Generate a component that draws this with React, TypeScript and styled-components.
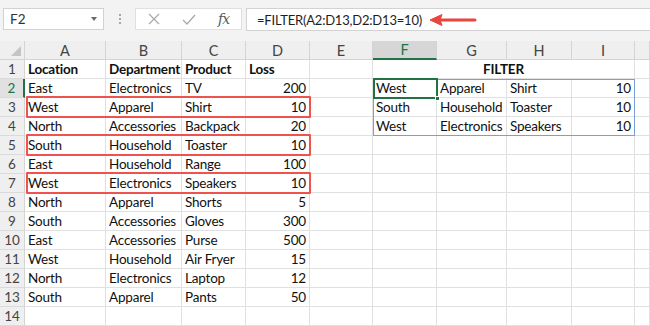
import React from 'react';
import styled, { createGlobalStyle } from 'styled-components';

const GlobalStyle = createGlobalStyle`
  html, body { margin: 0; padding: 0; background: #ffffff; overflow: hidden; }
  body { font-family: Lato, "Noto Sans", sans-serif; }
  * { box-sizing: border-box; }
`;

const Window = styled.div`
  width: 650px;
  height: 326px;
  overflow: hidden;
  display: flex;
  flex-direction: column;
  background: #ffffff;
`;

const FormulaBar = styled.div`
  flex: none;
  height: 41px;
  background: #f3f3f3;
  display: flex;
  align-items: flex-start;
  padding: 8px 0 0 3px;
`;

const NameBox = styled.div`
  width: 101px;
  height: 22px;
  background: #ffffff;
  border: 1px solid #d2d2d2;
  display: flex;
  align-items: center;
  justify-content: space-between;
  padding: 0 6px 0 6px;
  font-size: 13.5px;
  color: #333333;
`;

const Caret = styled.span`
  width: 0;
  height: 0;
  border-left: 3.5px solid transparent;
  border-right: 3.5px solid transparent;
  border-top: 4px solid #6a6a6a;
`;

const Grip = styled.div`
  width: 31px;
  height: 22px;
  display: flex;
  flex-direction: column;
  align-items: center;
  justify-content: center;
  gap: 2px;
`;

const GripDot = styled.span`
  width: 2px;
  height: 2px;
  background: #a8a8a8;
`;

const FxGroup = styled.div`
  width: 107px;
  height: 22px;
  background: #ffffff;
  border: 1px solid #e0e0e0;
  display: grid;
  grid-template-columns: repeat(3, 1fr);
  align-items: center;
  justify-items: center;
`;

const FxLabel = styled.span`
  font-family: "DejaVu Serif", "Liberation Serif", serif;
  font-style: italic;
  font-size: 14px;
  color: #5a5a5a;
  letter-spacing: -1px;
`;

const FormulaInput = styled.div`
  flex: 1;
  margin-left: 4px;
  height: 23px;
  background: #ffffff;
  border: 1px solid #d2d2d2;
  border-right: none;
  display: flex;
  align-items: center;
  padding-left: 10px;
  gap: 7px;
  font-size: 13px;
  letter-spacing: -0.2px;
  color: #1e1e1e;
`;

const Sheet = styled.div`
  flex: 1;
  display: grid;
  grid-template-columns: 25px 81px 76px 64px 64px 63px 64px 70px 65px 63px 1fr;
  grid-auto-rows: 19px;
  background: #ffffff;
`;

const Corner = styled.div`
  grid-column: 1;
  grid-row: 1;
  background: #efefef;
  border-right: 1px solid #d4d4d4;
  border-bottom: 1px solid #d4d4d4;
  position: relative;
  &::after {
    content: '';
    position: absolute;
    right: 3px;
    bottom: 3px;
    width: 0;
    height: 0;
    border-left: 10px solid transparent;
    border-bottom: 10px solid #c4c4c4;
  }
`;

const ColHead = styled.div<{ $col: number; $active?: boolean }>`
  grid-column: ${(p) => p.$col};
  grid-row: 1;
  background: ${(p) => (p.$active ? '#d6d6d6' : '#efefef')};
  color: ${(p) => (p.$active ? '#217346' : '#444444')};
  border-right: 1px solid #d4d4d4;
  border-bottom: ${(p) => (p.$active ? '2px solid #217346' : '1px solid #d4d4d4')};
  display: flex;
  align-items: center;
  justify-content: center;
  font-size: 14.5px;
`;

const RowHead = styled.div<{ $row: number; $active?: boolean }>`
  grid-column: 1;
  grid-row: ${(p) => p.$row};
  background: ${(p) => (p.$active ? '#e1e1e1' : '#efefef')};
  color: ${(p) => (p.$active ? '#217346' : '#444444')};
  border-right: ${(p) => (p.$active ? '2px solid #217346' : '1px solid #d4d4d4')};
  border-bottom: 1px solid #dadada;
  display: flex;
  align-items: center;
  justify-content: center;
  font-size: 13.5px;
`;

const Cell = styled.div<{
  $row: number;
  $col: number;
  $span?: number;
  $align?: 'left' | 'right' | 'center';
  $bold?: boolean;
}>`
  grid-row: ${(p) => p.$row};
  grid-column: ${(p) => `${p.$col} / span ${p.$span ?? 1}`};
  border-right: 1px solid #e0e0e0;
  border-bottom: 1px solid #e0e0e0;
  display: flex;
  align-items: center;
  justify-content: ${(p) =>
    p.$align === 'right' ? 'flex-end' : p.$align === 'center' ? 'center' : 'flex-start'};
  padding: 0 3px 0 3px;
  font-size: 13.5px;
  letter-spacing: -0.2px;
  font-weight: ${(p) => (p.$bold ? 700 : 400)};
  color: #111111;
  white-space: nowrap;
  overflow: hidden;
`;

const RedBox = styled.div<{ $row: number }>`
  grid-row: ${(p) => p.$row};
  grid-column: 2 / 6;
  margin: -2px -1px -1px 1px;
  border: 2px solid #ef5350;
  border-radius: 1px;
  z-index: 3;
  pointer-events: none;
`;

const RangeBox = styled.div`
  grid-row: 3 / 6;
  grid-column: 7 / 11;
  border: 1px solid #7a9fd8;
  z-index: 2;
  pointer-events: none;
`;

const SelectBox = styled.div`
  grid-row: 3;
  grid-column: 7;
  margin: -1px -1px -1px 0;
  border: 2px solid #217346;
  z-index: 4;
  position: relative;
  pointer-events: none;
`;

const FillHandle = styled.span`
  position: absolute;
  right: -4px;
  bottom: -4px;
  width: 5px;
  height: 5px;
  background: #217346;
  border: 1px solid #ffffff;
`;

const COLS = ['A', 'B', 'C', 'D', 'E', 'F', 'G', 'H', 'I', ''];

type Row = [string, string, string, number];

const DATA: Row[] = [
  ['East', 'Electronics', 'TV', 200],
  ['West', 'Apparel', 'Shirt', 10],
  ['North', 'Accessories', 'Backpack', 20],
  ['South', 'Household', 'Toaster', 10],
  ['East', 'Household', 'Range', 100],
  ['West', 'Electronics', 'Speakers', 10],
  ['North', 'Apparel', 'Shorts', 5],
  ['South', 'Accessories', 'Gloves', 300],
  ['East', 'Accessories', 'Purse', 500],
  ['West', 'Household', 'Air Fryer', 15],
  ['North', 'Electronics', 'Laptop', 12],
  ['South', 'Apparel', 'Pants', 50],
];

const RESULT: Row[] = [
  ['West', 'Apparel', 'Shirt', 10],
  ['South', 'Household', 'Toaster', 10],
  ['West', 'Electronics', 'Speakers', 10],
];

const HEADERS = ['Location', 'Department', 'Product', 'Loss'];

function CancelIcon() {
  return (
    <svg width="12" height="12" viewBox="0 0 12 12">
      <path d="M1 1 L11 11 M11 1 L1 11" stroke="#a9a9a9" strokeWidth="1.2" fill="none" />
    </svg>
  );
}

function EnterIcon() {
  return (
    <svg width="14" height="11" viewBox="0 0 14 11">
      <path d="M1 6 L5 10 L13 1" stroke="#a9a9a9" strokeWidth="1.3" fill="none" />
    </svg>
  );
}

function Arrow() {
  return (
    <svg width="50" height="14" viewBox="0 0 50 14">
      <path d="M10 7 L46 7" stroke="#e8453c" strokeWidth="3" strokeLinecap="round" />
      <path d="M1 7 L13 1.5 L11 7 L13 12.5 Z" fill="#e8453c" stroke="#e8453c" strokeWidth="1" strokeLinejoin="round" />
    </svg>
  );
}

export default function App() {
  const cells: React.ReactNode[] = [];
  for (let r = 1; r <= 14; r++) {
    const gr = r + 1;
    for (let c = 0; c < 10; c++) {
      const gc = c + 2;
      if (r === 1 && c >= 5 && c <= 8) {
        if (c === 5) {
          cells.push(
            <Cell key={`${r}-${c}`} $row={gr} $col={gc} $span={4} $align="center" $bold>
              FILTER
            </Cell>
          );
        }
        continue;
      }
      let value: React.ReactNode = null;
      let align: 'left' | 'right' = 'left';
      let bold = false;
      if (r === 1 && c < 4) {
        value = HEADERS[c];
        bold = true;
      } else if (r >= 2 && r <= 13 && c < 4) {
        value = DATA[r - 2][c];
        if (c === 3) align = 'right';
      } else if (r >= 2 && r <= 4 && c >= 5 && c <= 8) {
        value = RESULT[r - 2][c - 5];
        if (c === 8) align = 'right';
      }
      cells.push(
        <Cell key={`${r}-${c}`} $row={gr} $col={gc} $align={align} $bold={bold}>
          {value}
        </Cell>
      );
    }
  }

  return (
    <Window>
      <GlobalStyle />
      <FormulaBar>
        <NameBox>
          <span>F2</span>
          <Caret />
        </NameBox>
        <Grip>
          <GripDot />
          <GripDot />
          <GripDot />
        </Grip>
        <FxGroup>
          <CancelIcon />
          <EnterIcon />
          <FxLabel>fx</FxLabel>
        </FxGroup>
        <FormulaInput>
          <span>=FILTER(A2:D13,D2:D13=10)</span>
          <Arrow />
        </FormulaInput>
      </FormulaBar>
      <Sheet>
        <Corner />
        {COLS.map((l, i) => (
          <ColHead key={i} $col={i + 2} $active={l === 'F'}>
            {l}
          </ColHead>
        ))}
        {Array.from({ length: 14 }, (_, i) => (
          <RowHead key={i} $row={i + 2} $active={i + 1 === 2}>
            {i + 1}
          </RowHead>
        ))}
        {cells}
        <RedBox $row={4} />
        <RedBox $row={6} />
        <RedBox $row={8} />
        <RangeBox />
        <SelectBox>
          <FillHandle />
        </SelectBox>
      </Sheet>
    </Window>
  );
}
